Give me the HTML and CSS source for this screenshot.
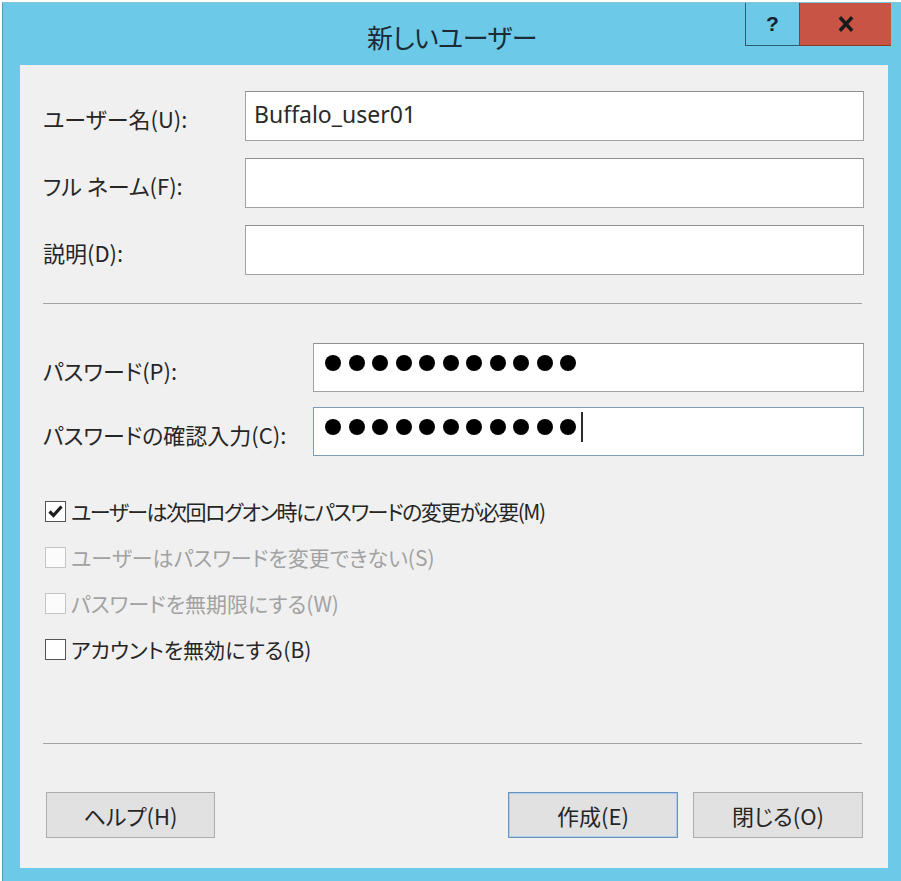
FILE: index.html
```html
<!DOCTYPE html>
<html lang="ja">
<head>
    <meta charset="UTF-8">
    <title>新しいユーザー</title>
    <link rel="stylesheet" href="styles.css">
</head>
<body>
    <div class="window">
        <div class="titlebar">
            <div></div>
            <div class="title">新しいユーザー</div>
            <div class="caption-buttons">
                <div class="cap-btn cap-help">?</div>
                <div class="cap-btn cap-close">
                    <svg width="16" height="16" viewBox="0 0 16 16">
                        <path d="M3 2.5 L13 13.5 M13 2.5 L3 13.5" stroke="#1b1b1b" stroke-width="3.4" stroke-linecap="square"/>
                    </svg>
                </div>
            </div>
        </div>

        <div class="client">
            <div class="fields">
                <div class="label">ユーザー名(U):</div>
                <div class="textbox">Buffalo_user01</div>
                <div class="label">フル ネーム(F):</div>
                <div class="textbox"></div>
                <div class="label">説明(D):</div>
                <div class="textbox"></div>
            </div>

            <div class="separator"></div>

            <div class="fields fields-password">
                <div class="label">パスワード(P):</div>
                <div class="textbox password">
                    <span class="dot"></span><span class="dot"></span><span class="dot"></span><span class="dot"></span>
                    <span class="dot"></span><span class="dot"></span><span class="dot"></span><span class="dot"></span>
                    <span class="dot"></span><span class="dot"></span><span class="dot"></span>
                </div>
                <div class="label">パスワードの確認入力(C):</div>
                <div class="textbox password focused">
                    <span class="dot"></span><span class="dot"></span><span class="dot"></span><span class="dot"></span>
                    <span class="dot"></span><span class="dot"></span><span class="dot"></span><span class="dot"></span>
                    <span class="dot"></span><span class="dot"></span><span class="dot"></span>
                    <span class="caret"></span>
                </div>
            </div>

            <div class="checks">
                <div class="check">
                    <span class="checkbox checked">
                        <svg width="19" height="19" viewBox="0 0 19 19">
                            <path d="M3.5 9.5 L7.5 13.5 L15.5 4.5" fill="none" stroke="#1e1e1e" stroke-width="3.2"/>
                        </svg>
                    </span>
                    <span class="long-text">ユーザーは次回ログオン時にパスワードの変更が必要(M)</span>
                </div>
                <div class="check disabled">
                    <span class="checkbox"></span>
                    <span>ユーザーはパスワードを変更できない(S)</span>
                </div>
                <div class="check disabled">
                    <span class="checkbox"></span>
                    <span>パスワードを無期限にする(W)</span>
                </div>
                <div class="check">
                    <span class="checkbox"></span>
                    <span>アカウントを無効にする(B)</span>
                </div>
            </div>

            <div class="separator separator-bottom"></div>

            <div class="buttons">
                <div class="button button-help">ヘルプ(H)</div>
                <div class="spacer"></div>
                <div class="button button-default">作成(E)</div>
                <div class="button">閉じる(O)</div>
            </div>
        </div>
    </div>
</body>
</html>
```

FILE: styles.css
```css
body {
    margin: 0;
    background: #ffffff;
    font-family: "Noto Sans CJK JP", sans-serif;
    color: #262626;
}
.window {
    margin: 2px 0 0 2px;
    width: 899px;
    height: 879px;
    box-sizing: border-box;
    background: #6ccae8;
    border-left: 1px solid #4f9fbd;
    border-top: 1px solid #7fc6dd;
    display: flex;
    flex-direction: column;
}
.titlebar {
    height: 62px;
    display: grid;
    grid-template-columns: 1fr auto 1fr;
}
.title {
    align-self: center;
    margin-top: 6px;
    font-size: 26px;
    line-height: 30px;
    color: #1c2b36;
    font-feature-settings: "palt";
    letter-spacing: -0.5px;
}
.caption-buttons {
    justify-self: end;
    align-self: start;
    display: flex;
    margin-right: 10px;
}
.cap-btn {
    height: 43px;
    box-sizing: border-box;
    display: flex;
    align-items: center;
    justify-content: center;
}
.cap-help {
    width: 55px;
    border: 1px solid #2f5d74;
    border-top: 0;
    font-family: "Liberation Sans", sans-serif;
    font-weight: bold;
    font-size: 21px;
    color: #16222c;
}
.cap-close {
    width: 91px;
    background: #c85446;
    border-bottom: 1px solid #8f3a30;
}

.client {
    flex: 1;
    margin: 0 13px 13px 17px;
    background: #f0f0f0;
    padding: 26px 24px 0 23px;
    display: flex;
    flex-direction: column;
}
.fields {
    display: grid;
    grid-template-columns: 202px 1fr;
    row-gap: 17px;
    align-items: center;
}
.fields-password {
    grid-template-columns: 270px 1fr;
    row-gap: 15px;
    margin-top: 39px;
}
.label {
    font-size: 22px;
    padding-top: 4px;
    font-feature-settings: "palt";
    white-space: nowrap;
}
.textbox {
    height: 50px;
    box-sizing: border-box;
    background: #ffffff;
    border: 1px solid #a2a2a2;
    border-top-color: #8f8f8f;
    padding: 0 8px 4px 8px;
    display: flex;
    align-items: center;
    font-family: "Noto Sans", sans-serif;
    font-size: 23px;
    color: #2a2a2a;
}
.password {
    height: 49px;
    padding: 0 0 9px 11px;
    gap: 7.5px;
}
.focused {
    border-color: #7f9cb9;
}
.dot {
    width: 16px;
    height: 16px;
    border-radius: 50%;
    background: #000000;
}
.caret {
    width: 2px;
    height: 30px;
    margin-left: -3px;
    background: #2a2a2a;
}
.separator {
    height: 1px;
    background: #a3a3a3;
    margin: 28px 2px 0 0;
}
.separator-bottom {
    margin-top: 71px;
}

.checks {
    margin-top: 32px;
}
.check {
    height: 46px;
    display: flex;
    align-items: center;
    gap: 5px;
    margin-left: 2px;
    font-size: 21px;
    font-feature-settings: "palt";
    white-space: nowrap;
}
.long-text {
    letter-spacing: -1.5px;
}
.checkbox {
    width: 21px;
    height: 21px;
    box-sizing: border-box;
    border: 1px solid #555555;
    background: #ffffff;
    display: flex;
    align-items: center;
    justify-content: center;
}
.disabled {
    color: #a2a2a2;
}
.disabled .checkbox {
    border-color: #c4c4c4;
    background: #fbfbfb;
}

.buttons {
    display: flex;
    gap: 15px;
    margin-top: 48px;
    margin-right: 1px;
}
.spacer {
    flex: 1;
}
.button {
    width: 170px;
    height: 46px;
    box-sizing: border-box;
    background: #e1e1e1;
    border: 1px solid #acacac;
    display: flex;
    align-items: center;
    justify-content: center;
    font-size: 22px;
    font-feature-settings: "palt";
    color: #262626;
}
.button-help {
    width: 169px;
    margin-left: 3px;
}
.button-default {
    border-color: #6a93bf;
    box-shadow: inset 0 0 0 1px #b3cbe3;
}
```
